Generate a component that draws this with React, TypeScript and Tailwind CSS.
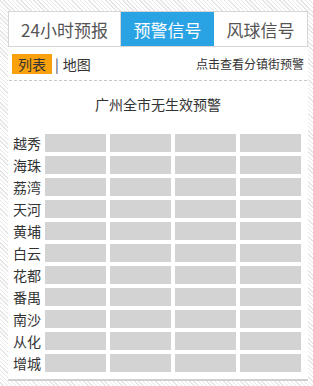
import React from "react";

const districts = ["越秀", "海珠", "荔湾", "天河", "黄埔", "白云", "花都", "番禺", "南沙", "从化", "增城"];

export default function App() {
  return (
    <div
      className="w-[313px] h-[386px] pl-[8px] pt-[11px] overflow-hidden"
      style={{
        fontFamily: '"Microsoft YaHei", "Noto Sans CJK SC", sans-serif',
        backgroundImage:
          "repeating-linear-gradient(45deg, #ffffff 0px, #ffffff 2px, #e6e6e6 2px, #e6e6e6 3px)",
      }}
    >
      <div className="w-[300px] h-[370px] bg-white border-b-[2px] border-[#d0d0d0] flex flex-col">
        <div className="flex h-[36px] border border-[#d6d6d6] text-[17px] leading-none">
          <div className="w-[112px] flex items-center justify-center text-[#555] border-r border-[#d6d6d6]">24小时预报</div>
          <div className="w-[93px] flex items-center justify-center bg-[#29a3e3] text-white">预警信号</div>
          <div className="flex-1 flex items-center justify-center text-[#555]">风球信号</div>
        </div>
        <div className="flex items-center h-[34px] pl-[3px] pr-[3px] border-b border-dashed border-[#c8c8c8] mx-[1px]">
          <span className="bg-[#f9a10c] text-[#333] text-[14px] w-[40px] h-[20px] flex items-center justify-center leading-none">列表</span>
          <span className="text-[#3a3a6a] text-[14px] ml-[3px] leading-none">|</span>
          <span className="text-[#333] text-[14px] ml-[4px] leading-none">地图</span>
          <span className="ml-auto text-[#333] text-[12px] leading-none">点击查看分镇街预警</span>
        </div>
        <div className="text-center text-[14px] text-[#333] mt-[16px] leading-none">广州全市无生效预警</div>
        <div className="mt-[23px] flex flex-col gap-[4px] pl-[5px]">
          {districts.map((d) => (
            <div key={d} className="flex items-center h-[18px]">
              <span className="w-[32px] text-[14px] text-[#333] leading-none">{d}</span>
              <div className="flex gap-[4px]">
                <div className="w-[61px] h-[18px] bg-[#d3d3d3]" />
                <div className="w-[61px] h-[18px] bg-[#d3d3d3]" />
                <div className="w-[61px] h-[18px] bg-[#d3d3d3]" />
                <div className="w-[61px] h-[18px] bg-[#d3d3d3]" />
              </div>
            </div>
          ))}
        </div>
      </div>
    </div>
  );
}
